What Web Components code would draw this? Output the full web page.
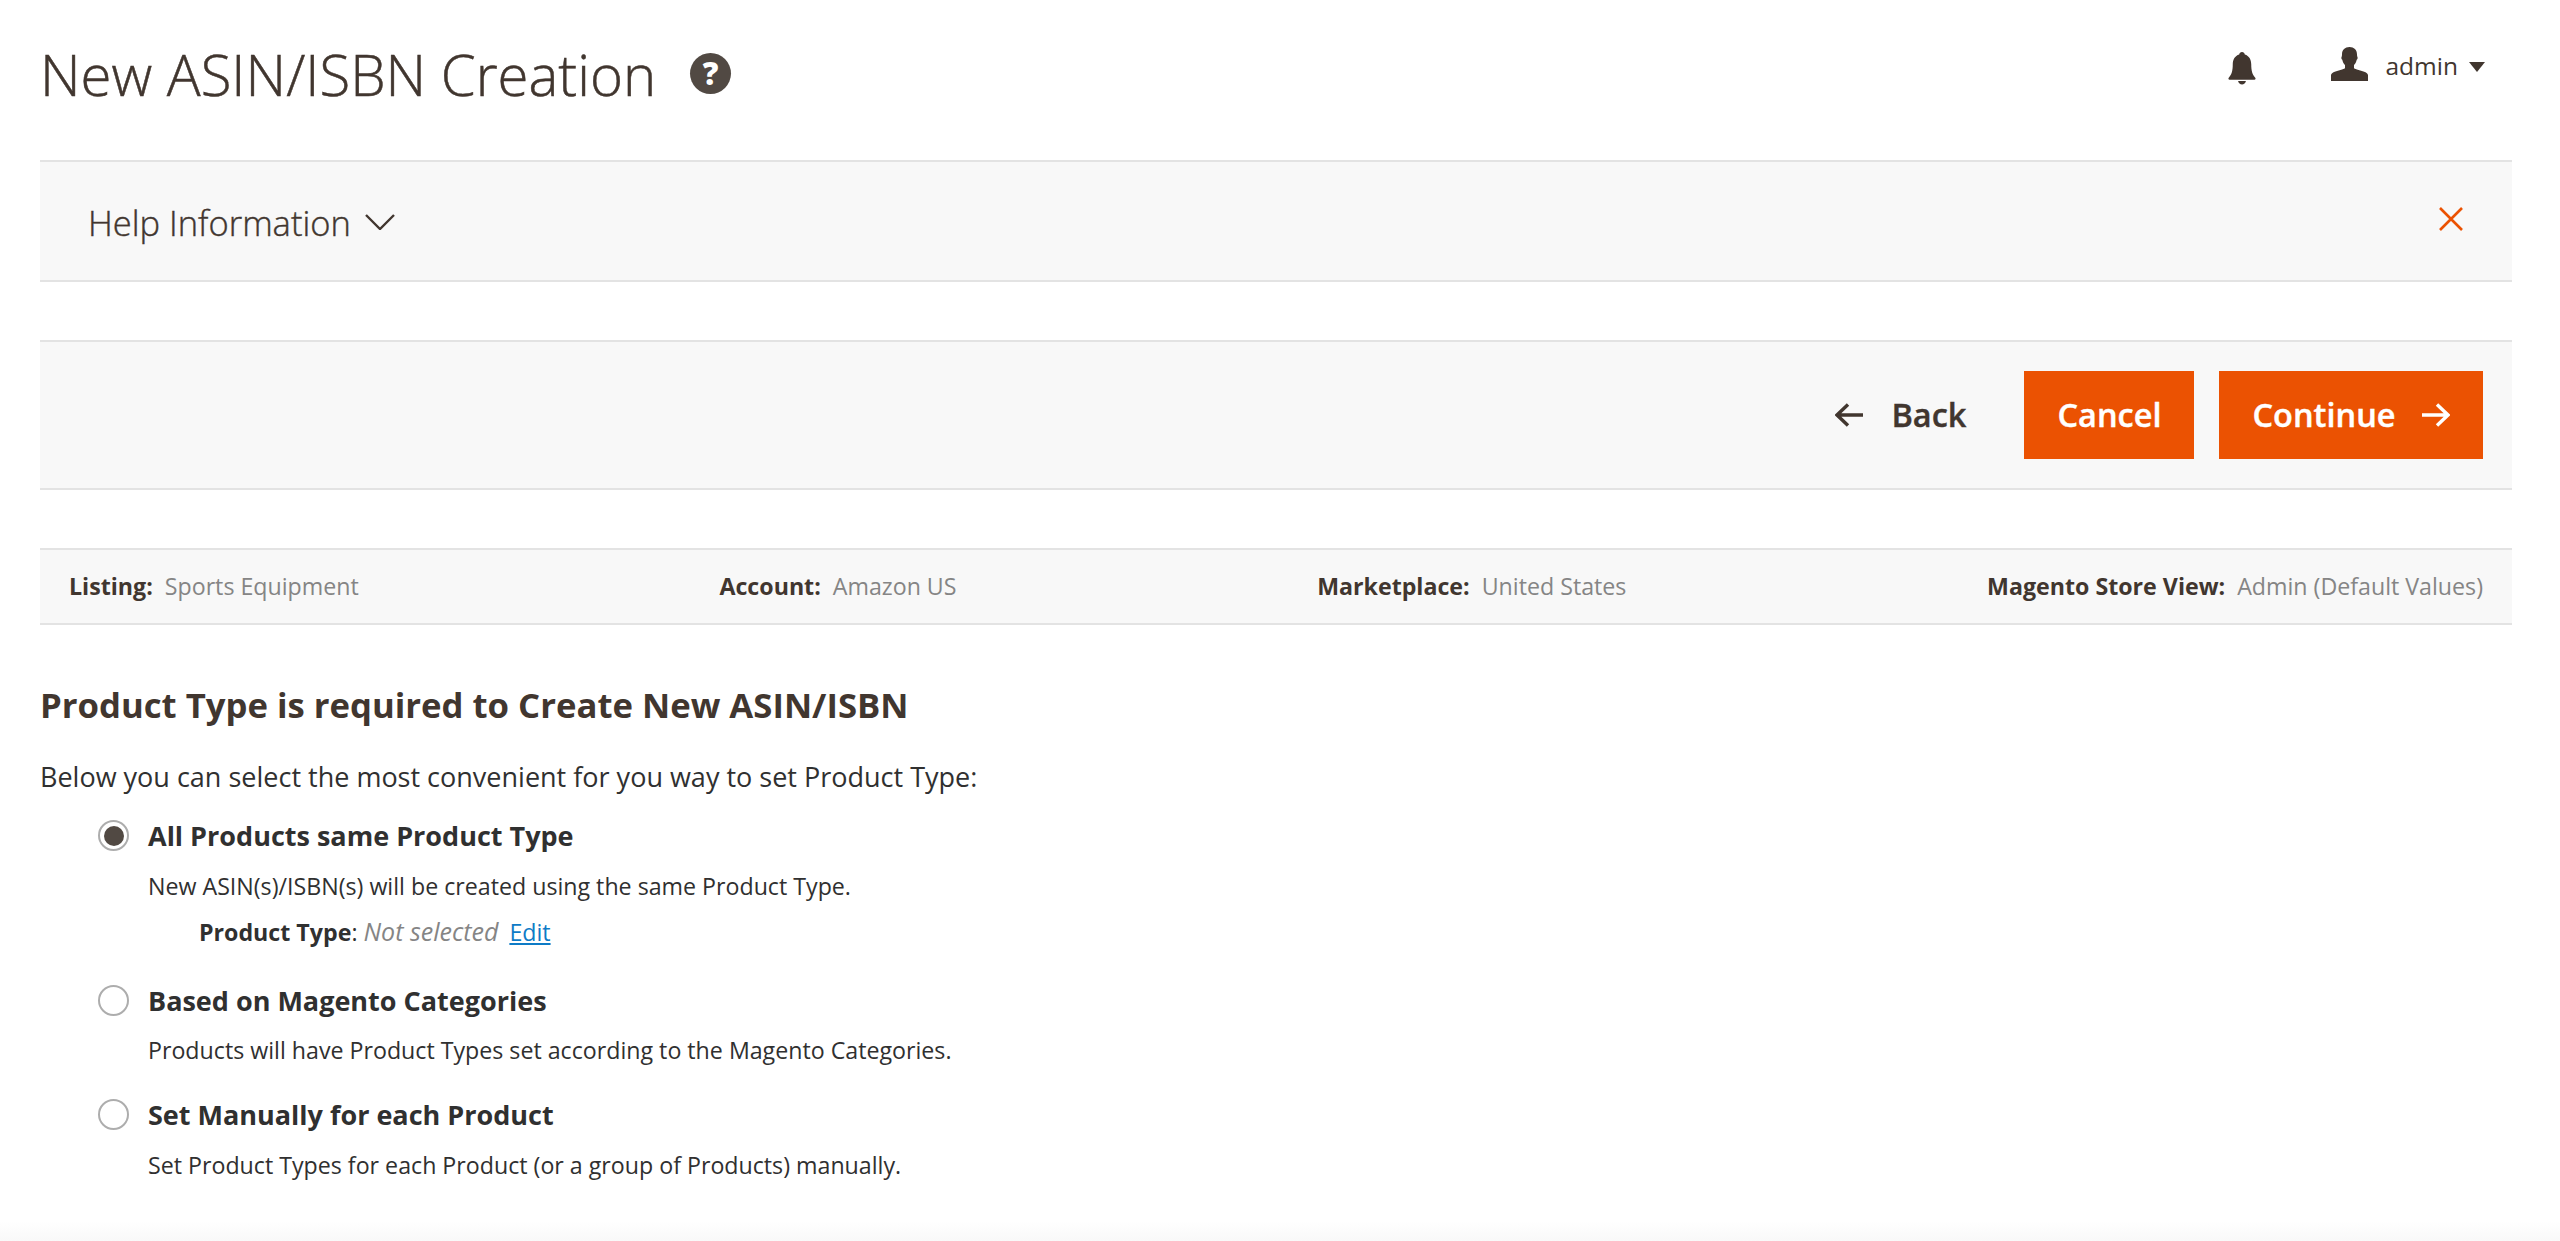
<!DOCTYPE html>
<html lang="en">
<head>
<meta charset="utf-8">
<title>New ASIN/ISBN Creation</title>
<style>
  html, body { margin: 0; height: 1241px; overflow: hidden; background: #fff; }
  body { font-family: "Open Sans", "Liberation Sans", sans-serif; color: #41362f; display: flex; flex-direction: column; }
  main { flex: 1; padding: 0 48px 0 40px; }
</style>
</head>
<body>
<main>
  <m2-page-header heading="New ASIN/ISBN Creation" user="admin"></m2-page-header>
  <m2-help-panel>Help Information</m2-help-panel>
  <m2-toolbar>
    <m2-button kind="back">Back</m2-button>
    <m2-button kind="primary">Cancel</m2-button>
    <m2-button kind="primary" arrow>Continue</m2-button>
  </m2-toolbar>
  <m2-info-bar>
    <m2-info-item label="Listing:">Sports Equipment</m2-info-item>
    <m2-info-item label="Account:">Amazon US</m2-info-item>
    <m2-info-item label="Marketplace:">United States</m2-info-item>
    <m2-info-item label="Magento Store View:">Admin (Default Values)</m2-info-item>
  </m2-info-bar>
  <m2-mode-form>
    <span slot="title">Product Type is required to Create New ASIN/ISBN</span>
    <span slot="intro">Below you can select the most convenient for you way to set Product Type:</span>
    <m2-radio-option label="All Products same Product Type" checked>
      New ASIN(s)/ISBN(s) will be created using the same Product Type.
      <m2-product-type slot="extra"></m2-product-type>
    </m2-radio-option>
    <m2-radio-option label="Based on Magento Categories">
      Products will have Product Types set according to the Magento Categories.
    </m2-radio-option>
    <m2-radio-option label="Set Manually for each Product">
      Set Product Types for each Product (or a group of Products) manually.
    </m2-radio-option>
  </m2-mode-form>
</main>
<m2-page-fade></m2-page-fade>

<script>
// shared helper, every element gets an open shadow root from a string
class Base extends HTMLElement {
  render(html) {
    this.attachShadow({ mode: "open" }).innerHTML = html;
  }
}

// page title + bell + user
class PageHeader extends Base {
  connectedCallback() {
    this.render(`
      <style>
        :host { display: flex; justify-content: space-between; align-items: flex-start; height: 160px; }
        .left { display: flex; align-items: center; padding-top: 36px; }
        h1 { margin: 0; font-size: 56.300px; font-weight: 300; line-height: 76px; color: #41362f; -webkit-text-stroke: .5px #41362f; }
        .help {
          display: flex; align-items: center; justify-content: center;
          width: 41px; height: 41px; margin: -2px 0 0 34px; border-radius: 50%;
          background: #514943; color: #fff; font-size: 31px; font-weight: 800; line-height: 1;
        }
        .right { display: flex; align-items: flex-start; padding: 47px 27px 0 0; }
        .bell { display: block; width: 28px; height: 33px; margin: 5px 75px 0 0; }
        .user { display: block; width: 37px; height: 34px; margin-right: 18px; }
        .name { font-size: 24.500px; line-height: 36px; margin-top: 1px; color: #41362f; }
        .caret { width: 0; height: 0; margin: 15px 0 0 11px; border: 8px solid transparent; border-top: 10px solid #41362f; border-bottom: 0; }
      </style>
      <div class="left">
        <h1>${this.getAttribute("heading")}</h1>
        <span class="help">?</span>
      </div>
      <div class="right">
        <svg class="bell" viewBox="0 0 30 34" preserveAspectRatio="none" fill="#41362f">
          <path d="M15 0c1.600 0 2.800 1 3 2.600 4.600 1.400 6.900 5 6.900 10.400 0 6.600 1.300 10.700 4.300 13.500.7.7.3 2-.9 2H1.700c-1.200 0-1.600-1.300-.9-2 3-2.800 4.300-6.900 4.300-13.500 0-5.400 2.300-9 6.900-10.400C12.200 1 13.400 0 15 0z"/>
          <path d="M10.800 30h8.400c-.5 2.300-2.200 3.600-4.200 3.600S11.300 32.300 10.800 30z"/>
        </svg>
        <svg class="user" viewBox="0 0 37 34" fill="#41362f">
          <path d="M18.500 0c4.500 0 7.500 2.800 7.500 7.500 0 1 .1 1.800.4 2.400.5.500.2 2.300-.7 2.900-.4 2.300-1.300 4-2.700 5.300v3.200c2 1.300 8.500 2.700 11.500 4 1.700.8 2.500 1.900 2.500 3.300V34H0v-5.400c0-1.400.8-2.500 2.500-3.300 3-1.300 9.500-2.700 11.500-4v-3.200c-1.400-1.300-2.300-3-2.700-5.300-.9-.6-1.200-2.400-.7-2.900.3-.6.4-1.400.4-2.400C11 2.800 14 0 18.500 0z"/>
        </svg>
        <span class="name">${this.getAttribute("user")}</span>
        <span class="caret"></span>
      </div>
    `);
  }
}

// collapsed help block
class HelpPanel extends Base {
  connectedCallback() {
    this.render(`
      <style>
        :host {
          display: flex; align-items: center; justify-content: space-between; box-sizing: border-box;
          height: 122px; margin-bottom: 58px; padding: 0 49px 0 48px;
          background: #f8f8f8; border: solid #e3e3e3; border-width: 2px 0;
        }
        .title { display: flex; align-items: center; font-size: 34.500px; font-weight: 300; color: #41362f; -webkit-text-stroke: .4px #41362f; padding-top: 2px; }
        svg { display: block; }
        .chev { width: 30px; height: 16px; margin: 0 0 0 14px; }
        .close { width: 24px; height: 24px; margin-top: -5px; }
      </style>
      <div class="title"><slot></slot>
        <svg class="chev" viewBox="0 0 30 16" fill="none" stroke="#41362f" stroke-width="2.400"><path d="M1 1l14 14L29 1"/></svg>
      </div>
      <svg class="close" viewBox="0 0 24 24" fill="none" stroke="#eb5202" stroke-width="2.600"><path d="M1 1l22 22M23 1L1 23"/></svg>
    `);
  }
}

// grey action bar
class Toolbar extends Base {
  connectedCallback() {
    this.render(`
      <style>
        :host {
          display: flex; align-items: center; justify-content: flex-end; box-sizing: border-box;
          height: 150px; margin-bottom: 58px; padding: 0 29px;
          background: #f8f8f8; border: solid #e3e3e3; border-width: 2px 0;
        }
      </style>
      <slot></slot>
    `);
  }
}

class Button extends Base {
  connectedCallback() {
    const kind = this.getAttribute("kind");
    const arrow = `<svg viewBox="0 0 28 24" fill="none" stroke="currentColor" stroke-width="3.400"><path d="M0 12h26M15 1.500L26 12 15 22.500"/></svg>`;
    this.render(`
      <style>
        :host { display: block; margin-left: 25px; }
        button {
          display: flex; align-items: center; height: 88px; padding: 0 33px; border: 0; border-radius: 0;
          font: 600 32.500px/1 "Open Sans", "Liberation Sans", sans-serif; -webkit-text-stroke: .4px currentColor;
        }
        .primary { background: #eb5202; color: #fff; }
        .back { background: none; color: #41362f; padding: 0 33px 0 0; }
        svg { display: block; width: 28px; height: 24px; }
        .back svg { transform: scaleX(-1); margin-right: 28px; }
        .primary svg { margin-left: 26.500px; }
      </style>
      <button class="${kind}">
        ${kind === "back" ? arrow : ""}<slot></slot>${this.hasAttribute("arrow") ? arrow : ""}
      </button>
    `);
  }
}

// listing info strip
class InfoBar extends Base {
  connectedCallback() {
    this.render(`
      <style>
        :host {
          display: flex; align-items: center; justify-content: space-between; box-sizing: border-box;
          height: 77px; margin-bottom: 58px; padding: 0 29px 2px;
          background: #f8f8f8; border: solid #e3e3e3; border-width: 2px 0;
        }
      </style>
      <slot></slot>
    `);
  }
}

class InfoItem extends Base {
  connectedCallback() {
    this.render(`
      <style>
        :host { display: block; font-size: 23.200px; color: #858585; white-space: nowrap; }
        b { font-weight: 700; color: #41362f; margin-right: 12px; }
      </style>
      <b>${this.getAttribute("label")}</b><slot></slot>
    `);
  }
}

class ModeForm extends Base {
  connectedCallback() {
    this.render(`
      <style>
        :host { display: block; }
        h2 { margin: 0 0 31px; font-size: 34.700px; font-weight: 700; line-height: 44px; color: #41362f; }
        p { margin: 0 0 20px; font-size: 27px; line-height: 38px; color: #303030; }
        .options { display: flex; flex-direction: column; gap: 28px; padding-left: 58px; }
      </style>
      <h2><slot name="title"></slot></h2>
      <p><slot name="intro"></slot></p>
      <div class="options"><slot></slot></div>
    `);
  }
}

class RadioOption extends Base {
  connectedCallback() {
    const checked = this.hasAttribute("checked");
    this.render(`
      <style>
        :host { display: grid; grid-template-columns: 32px 1fr; column-gap: 18px; color: #303030; }
        .radio {
          box-sizing: border-box; width: 31px; height: 31px; margin-top: 4px; border: 2px solid #adadad; border-radius: 50%;
          background: #fff; display: flex; align-items: center; justify-content: center;
        }
        .dot { width: 20px; height: 20px; border-radius: 50%; background: #514943; }
        .label { font-size: 27px; font-weight: 700; line-height: 40px; }
        .desc { grid-column: 2; margin-top: 12.500px; font-size: 23.200px; line-height: 34px; }
        .extra { grid-column: 2; }
      </style>
      <span class="radio">${checked ? '<span class="dot"></span>' : ""}</span>
      <span class="label">${this.getAttribute("label")}</span>
      <div class="desc"><slot></slot></div>
      <div class="extra"><slot name="extra"></slot></div>
    `);
  }
}

class ProductType extends Base {
  connectedCallback() {
    this.render(`
      <style>
        :host { display: block; margin: 11px 0 4px 51px; font-size: 23.200px; line-height: 34px; color: #303030; }
        b { font-weight: 700; }
        i { color: #858585; font-size: 25px; margin-right: 5px; }
        a { color: #0e7bc6; text-decoration: underline; }
      </style>
      <b>Product Type</b>: <i>Not selected</i> <a href="#">Edit</a>
    `);
  }
}

// faint tint at the very bottom of the page
class PageFade extends Base {
  connectedCallback() {
    this.render(`
      <style>
        :host { display: block; height: 20px; background: linear-gradient(#fff, #f9f9f9); }
      </style>
    `);
  }
}

customElements.define("m2-page-header", PageHeader);
customElements.define("m2-help-panel", HelpPanel);
customElements.define("m2-toolbar", Toolbar);
customElements.define("m2-button", Button);
customElements.define("m2-info-bar", InfoBar);
customElements.define("m2-info-item", InfoItem);
customElements.define("m2-mode-form", ModeForm);
customElements.define("m2-radio-option", RadioOption);
customElements.define("m2-product-type", ProductType);
customElements.define("m2-page-fade", PageFade);
</script>
</body>
</html>
